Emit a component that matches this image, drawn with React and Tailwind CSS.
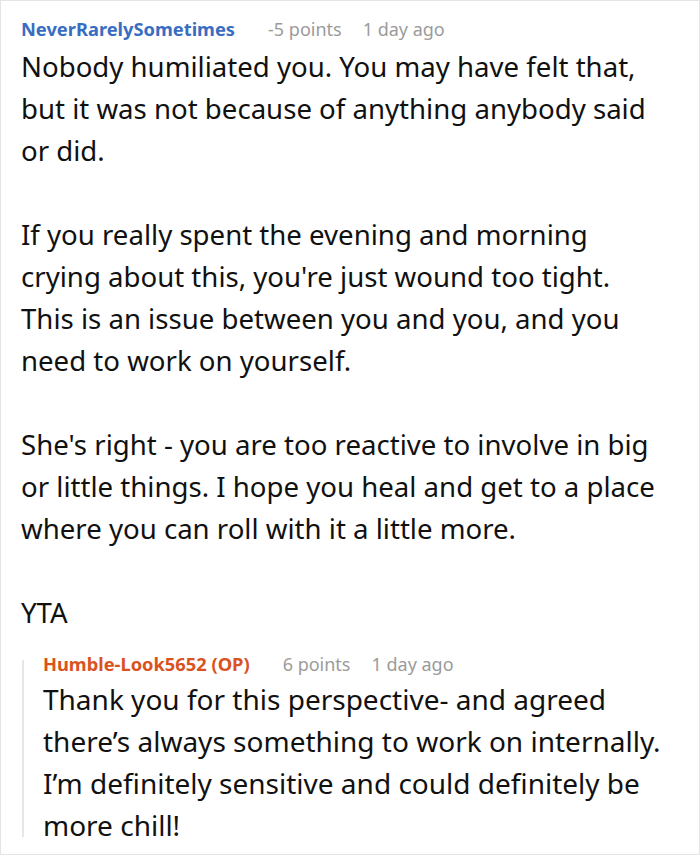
import React from "react";

const comment = {
  author: "NeverRarelySometimes",
  points: "-5 points",
  time: "1 day ago",
  paragraphs: [
    ["Nobody humiliated you. You may have felt that,", "but it was not because of anything anybody said", "or did."],
    [
      "If you really spent the evening and morning",
      "crying about this, you're just wound too tight.",
      "This is an issue between you and you, and you",
      "need to work on yourself.",
    ],
    [
      "She's right - you are too reactive to involve in big",
      "or little things. I hope you heal and get to a place",
      "where you can roll with it a little more.",
    ],
    ["YTA"],
  ],
};

const reply = {
  author: "Humble-Look5652 (OP)",
  points: "6 points",
  time: "1 day ago",
  lines: [
    "Thank you for this perspective- and agreed",
    "there\u2019s always something to work on internally.",
    "I\u2019m definitely sensitive and could definitely be",
    "more chill!",
  ],
};

const Meta = ({ author, points, time, color }) => (
  <div className="flex items-center whitespace-nowrap text-[18px] leading-6">
    <span className={`font-bold text-[18.3px] ${color}`}>{author}</span>
    <span className="ml-[33px] text-[#9b9b9b]">{points}</span>
    <span className="ml-[21px] text-[#9b9b9b]">{time}</span>
  </div>
);

const App = () => {
  return (
    <div className="w-[700px] h-[855px] border border-[#e4e4e4] bg-white pl-[20px] pt-[16px] font-['Noto_Sans',sans-serif] overflow-hidden">
      <Meta author={comment.author} points={comment.points} time={comment.time} color="text-[#386dc2]" />

      <div className="mt-[4px] text-[27.6px] leading-[42px] text-[#111]">
        {comment.paragraphs.map((para, i) => (
          <p key={i} className={`whitespace-nowrap ${i < comment.paragraphs.length - 1 ? "mb-[42px]" : ""}`}>
            {para.map((line, j) => (
              <React.Fragment key={j}>
                {line}
                {j < para.length - 1 && <br />}
              </React.Fragment>
            ))}
          </p>
        ))}
      </div>

      <div className="mt-[19px] flex">
        <div className="mt-[8px] ml-[1px] h-[177px] w-[2px] shrink-0 bg-[#e6e6e6]" />
        <div className="ml-[19px]">
          <Meta author={reply.author} points={reply.points} time={reply.time} color="text-[#d9531f]" />
          <div className="mt-[2px] text-[28px] leading-[42px] text-[#111] whitespace-nowrap">
            {reply.lines.map((line, i) => (
              <div key={i}>{line}</div>
            ))}
          </div>
        </div>
      </div>
    </div>
  );
};

export default App;
